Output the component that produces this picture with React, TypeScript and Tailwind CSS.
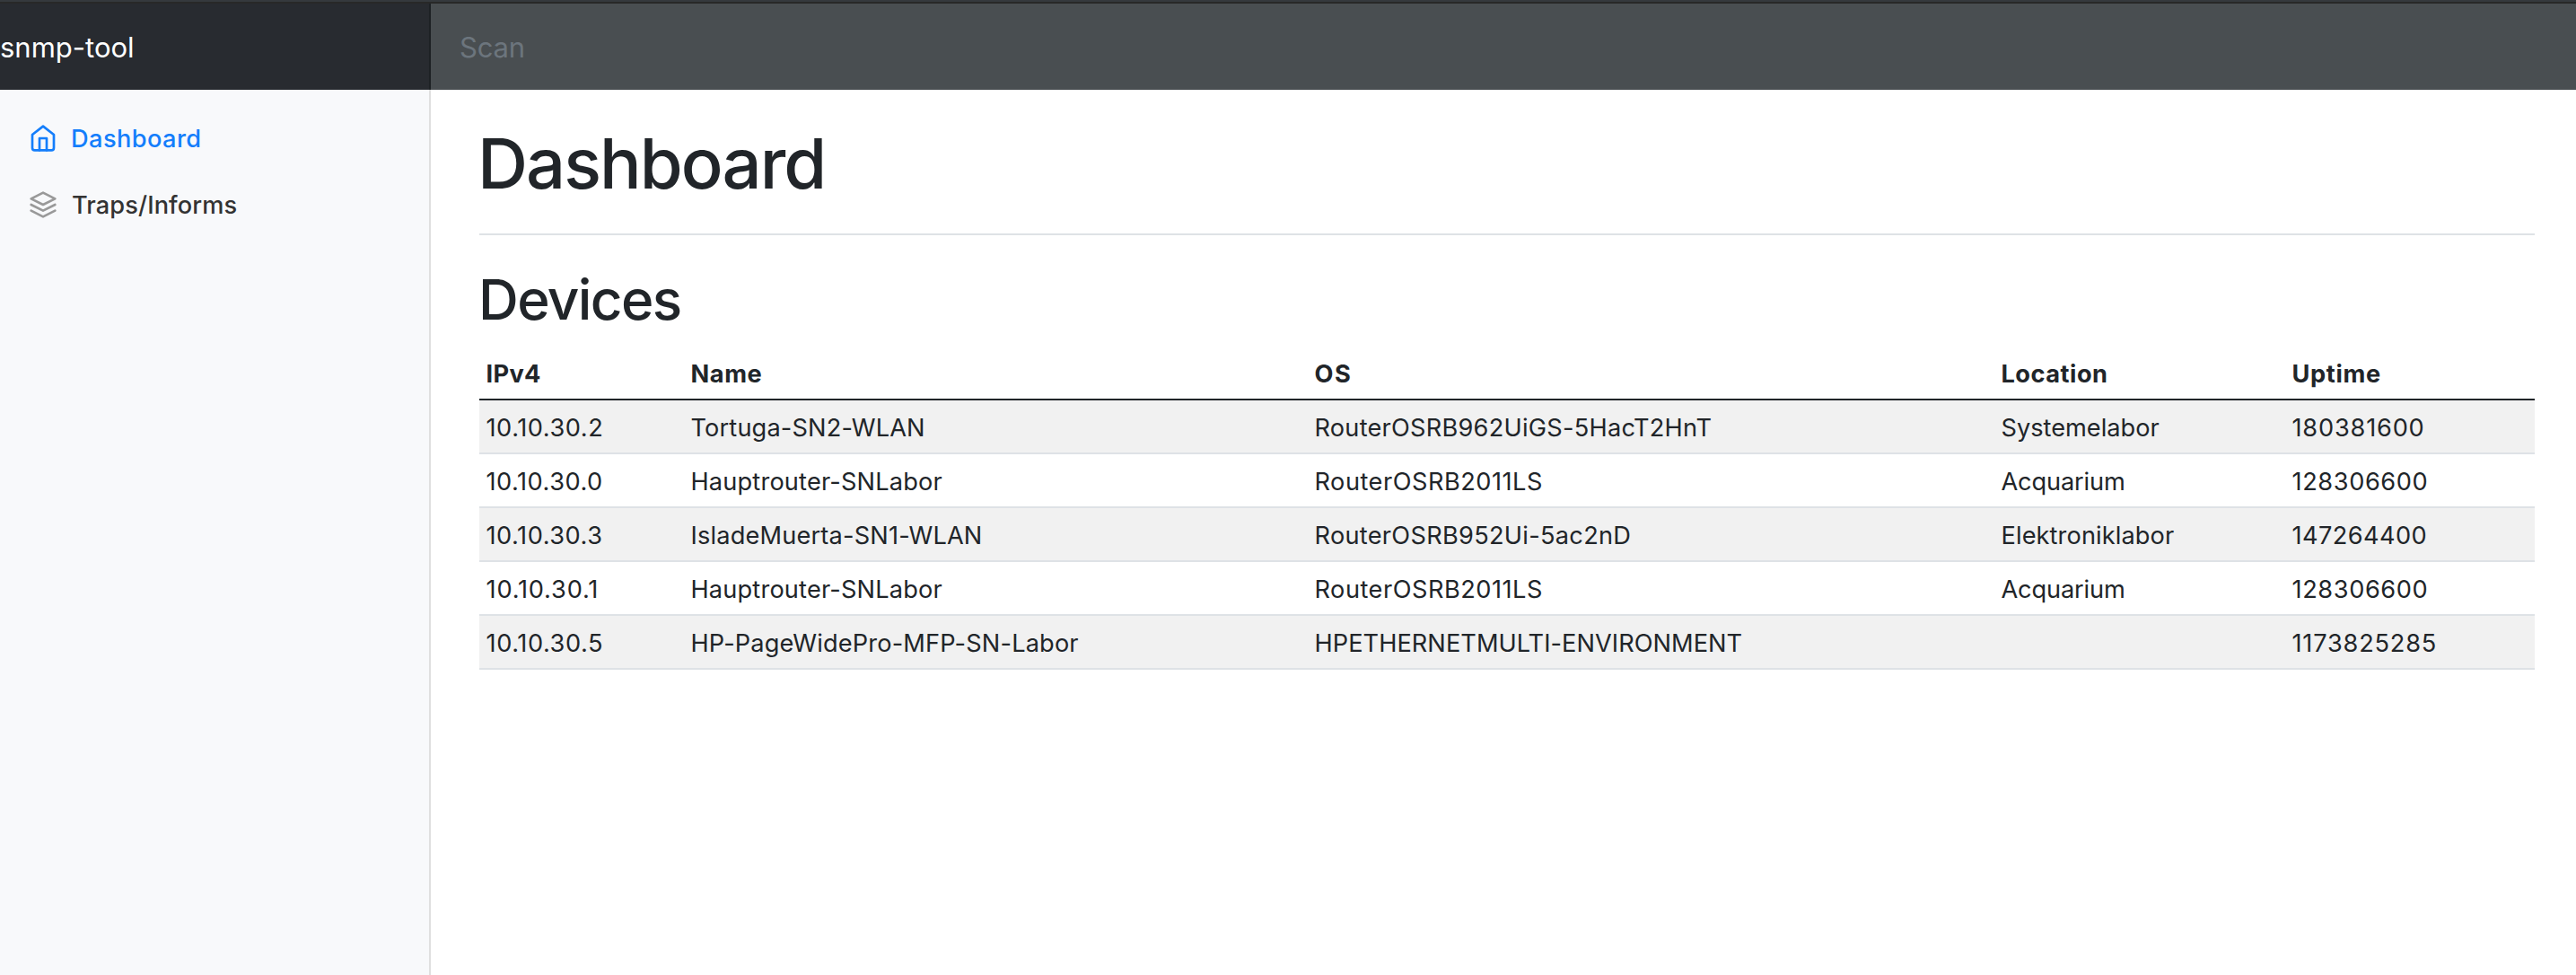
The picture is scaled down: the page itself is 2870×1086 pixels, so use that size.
import type { ReactNode } from "react";

type Cell = { text: string; spacing?: string };

const headers: Cell[] = [
  { text: "IPv4", spacing: "tracking-[0.316px]" },
  { text: "Name", spacing: "tracking-[0.561px]" },
  { text: "OS", spacing: "tracking-[1.6px]" },
  { text: "Location", spacing: "tracking-[0.501px]" },
  { text: "Uptime", spacing: "tracking-[0.665px]" },
];

const devices: Cell[][] = [
  [
    { text: "10.10.30.2", spacing: "tracking-[0.56px]" },
    { text: "Tortuga-SN2-WLAN", spacing: "tracking-[0.15px]" },
    { text: "RouterOSRB962UiGS-5HacT2HnT", spacing: "tracking-[0.23px]" },
    { text: "Systemelabor" },
    { text: "180381600", spacing: "tracking-[0.8px]" },
  ],
  [
    { text: "10.10.30.0", spacing: "tracking-[0.51px]" },
    { text: "Hauptrouter-SNLabor", spacing: "tracking-[0.17px]" },
    { text: "RouterOSRB2011LS", spacing: "tracking-[0.5px]" },
    { text: "Acquarium", spacing: "tracking-[-0.15px]" },
    { text: "128306600", spacing: "tracking-[0.6px]" },
  ],
  [
    { text: "10.10.30.3", spacing: "tracking-[0.53px]" },
    { text: "IsladeMuerta-SN1-WLAN", spacing: "tracking-[0.17px]" },
    { text: "RouterOSRB952Ui-5ac2nD", spacing: "tracking-[0.28px]" },
    { text: "Elektroniklabor", spacing: "tracking-[0.1px]" },
    { text: "147264400", spacing: "tracking-[0.42px]" },
  ],
  [
    { text: "10.10.30.1", spacing: "tracking-[0.82px]" },
    { text: "Hauptrouter-SNLabor", spacing: "tracking-[0.17px]" },
    { text: "RouterOSRB2011LS", spacing: "tracking-[0.5px]" },
    { text: "Acquarium", spacing: "tracking-[-0.15px]" },
    { text: "128306600", spacing: "tracking-[0.6px]" },
  ],
  [
    { text: "10.10.30.5", spacing: "tracking-[0.58px]" },
    { text: "HP-PageWidePro-MFP-SN-Labor", spacing: "tracking-[0.16px]" },
    { text: "HPETHERNETMULTI-ENVIRONMENT", spacing: "tracking-[0.05px]" },
    { text: "" },
    { text: "1173825285", spacing: "tracking-[0.8px]" },
  ],
];

function Icon({ className, children }: { className: string; children: ReactNode }) {
  return (
    <svg
      viewBox="0 0 24 24"
      fill="none"
      stroke="currentColor"
      strokeWidth="2"
      strokeLinecap="round"
      strokeLinejoin="round"
      className={`h-8 w-8 shrink-0 ${className}`}
    >
      {children}
    </svg>
  );
}

function Header() {
  return (
    <header className="flex h-[100px] shrink-0 border-t-2 border-[#35393d] bg-[#343a40]">
      <div className="flex w-full border-t-2 border-[#282828]">
        <div className="flex w-[480px] items-center border-r-2 border-[#1d2124] bg-[#282b30] pt-0.5 text-[31px] leading-[48px] text-white">
          snmp-tool
        </div>
        <div className="flex flex-1 items-center bg-[#494e51] pt-0.5 pl-8 text-[31px] leading-[48px] tracking-[-0.2px] text-[#6c757d]">
          Scan
        </div>
      </div>
    </header>
  );
}

function Sidebar() {
  return (
    <nav className="w-[480px] shrink-0 border-r-2 border-[#dfdfdf] bg-[#f8f9fb] pt-[17px] text-[27.2px] font-medium leading-[42px]">
      <a className="flex h-[74px] items-center pl-8 text-[#147efb]">
        <Icon className="text-[#147efb]">
          <path d="M3 9l9-7 9 7v11a2 2 0 0 1-2 2H5a2 2 0 0 1-2-2z" />
          <polyline points="9 22 9 12 15 12 15 22" />
        </Icon>
        <span className="ml-[15px] pt-0.5 tracking-[0.42px]">Dashboard</span>
      </a>
      <a className="flex h-[74px] items-center pl-8 text-[#333333]">
        <Icon className="text-[#999999]">
          <polygon points="12 2 2 7 12 12 22 7 12 2" />
          <polyline points="2 17 12 22 22 17" />
          <polyline points="2 12 12 17 22 12" />
        </Icon>
        <span className="ml-4 pt-0.5 tracking-[0.1px]">Traps/Informs</span>
      </a>
    </nav>
  );
}

function DeviceTable() {
  return (
    <table className="w-full table-fixed border-separate border-spacing-0 text-left text-[27.2px] leading-[42px]">
      <colgroup>
        <col className="w-[228px]" />
        <col className="w-[695px]" />
        <col className="w-[765px]" />
        <col className="w-[324px]" />
        <col className="w-[278px]" />
      </colgroup>
      <thead>
        <tr>
          {headers.map((h) => (
            <th key={h.text} className={`h-[60px] border-b-2 border-[#212529] pt-1 pl-[7.5px] font-bold ${h.spacing}`}>
              {h.text}
            </th>
          ))}
        </tr>
      </thead>
      <tbody>
        {devices.map((row, i) => (
          <tr key={i} className="odd:bg-[#f1f1f1]">
            {row.map((cell, j) => (
              <td key={j} className={`h-[60px] border-b-2 border-[#dee2e6] pt-1 pl-[7.5px] ${cell.spacing ?? ""}`}>
                {cell.text}
              </td>
            ))}
          </tr>
        ))}
      </tbody>
    </table>
  );
}

export default function App() {
  return (
    <div className="flex h-[1086px] flex-col overflow-hidden bg-white font-['Inter',sans-serif] text-[#212529]">
      <Header />
      <div className="flex min-h-0 flex-1">
        <Sidebar />
        <main className="flex-1 pr-[46px] pl-[54px]">
          <div className="flex h-[162px] items-start border-b-2 border-[#dee2e6] pt-[34px]">
            <h1 className="-ml-0.5 text-[77.6px] leading-[96px] font-medium tracking-[-1.926px]">Dashboard</h1>
          </div>
          <div className="flex h-[124px] items-start pt-[33px]">
            <h2 className="-ml-px text-[62px] leading-[78px] font-medium tracking-[-1.6px]">Devices</h2>
          </div>
          <DeviceTable />
        </main>
      </div>
    </div>
  );
}
